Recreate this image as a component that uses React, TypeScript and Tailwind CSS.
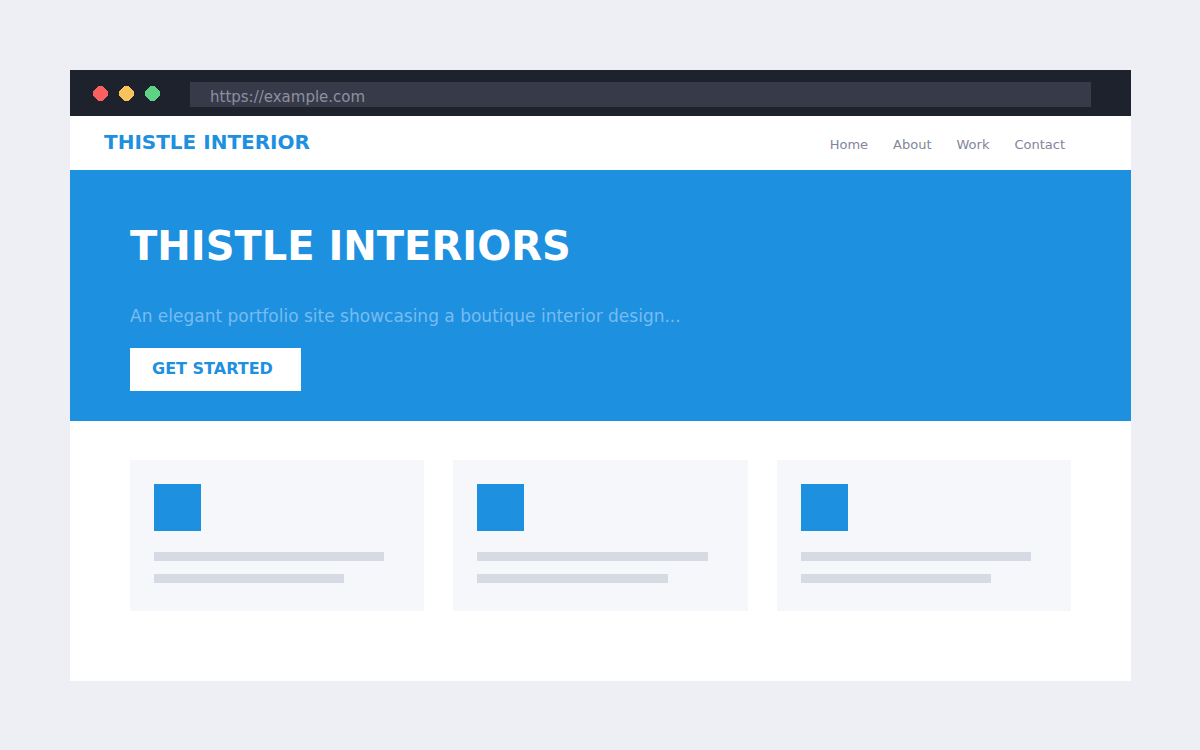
const navLinks = ["Home", "About", "Work", "Contact"];

const WindowDot = ({ className }: { className: string }) => (
  <svg
    viewBox="0 0 15 15"
    shapeRendering="crispEdges"
    className={`size-[15px] ${className}`}
    aria-hidden="true"
  >
    <polygon points="5.5,0 9.5,0 15,5.5 15,9.5 9.5,15 5.5,15 0,9.5 0,5.5" />
  </svg>
);

const PlaceholderCard = () => (
  <div className="bg-[#f6f7fb] pl-6 pr-10 pt-6 pb-7">
    <div className="size-[47px] bg-[#1e90e0]" />
    <div className="mt-[21px] h-[9px] bg-[#d6dae3]" />
    <div className="mt-[13px] mr-10 h-[9px] bg-[#d6dae3]" />
  </div>
);

const App = () => {
  return (
    <div className="min-h-screen bg-[#eeeff5] pl-[70px] pr-[69px] py-[70px] font-['DejaVu_Sans',sans-serif]">
      <div className="bg-white">
        <div className="flex items-start bg-[#1e222c] pl-[23px] pr-10 pt-3 pb-[9px]">
          <div className="flex gap-[11px] pt-1">
            <WindowDot className="fill-[#fb5f5f]" />
            <WindowDot className="fill-[#f8c35d]" />
            <WindowDot className="fill-[#5fd385]" />
          </div>
          <input
            type="text"
            aria-label="Address"
            defaultValue="https://example.com"
            className="ml-[30px] h-[25px] min-w-0 flex-1 bg-[#373b49] px-5 pt-[5px] text-[15px] leading-5 text-[#8c90a0] outline-none"
          />
        </div>

        <header className="flex items-baseline justify-between pl-[34px] pr-[66px] pt-3 pb-[14px]">
          <a href="#" className="text-[20px] leading-7 font-bold text-[#1e90e0]">
            THISTLE INTERIOR
          </a>
          <nav className="flex gap-[25px] text-[13px] leading-5 text-[#82869a]">
            {navLinks.map((link) => (
              <a key={link} href="#">
                {link}
              </a>
            ))}
          </nav>
        </header>

        <section className="bg-[#1e90e0] px-[60px] pt-[52px] pb-[30px]">
          <h1 className="text-[40px] leading-[48px] font-bold text-white">
            THISTLE INTERIORS
          </h1>
          <p className="mt-[34px] text-[17px] leading-6 text-[#78bcf0]">
            An elegant portfolio site showcasing a boutique interior design...
          </p>
          <button
            type="button"
            className="mt-5 block h-[43px] w-[171px] bg-white pl-[22px] pb-[2px] text-left text-[16px] leading-6 font-bold text-[#1e90e0]"
          >
            GET STARTED
          </button>
        </section>

        <section className="grid grid-cols-3 gap-[29px] px-[60px] pt-[39px] pb-[70px]">
          <PlaceholderCard />
          <PlaceholderCard />
          <PlaceholderCard />
        </section>
      </div>
    </div>
  );
};

export default App;
